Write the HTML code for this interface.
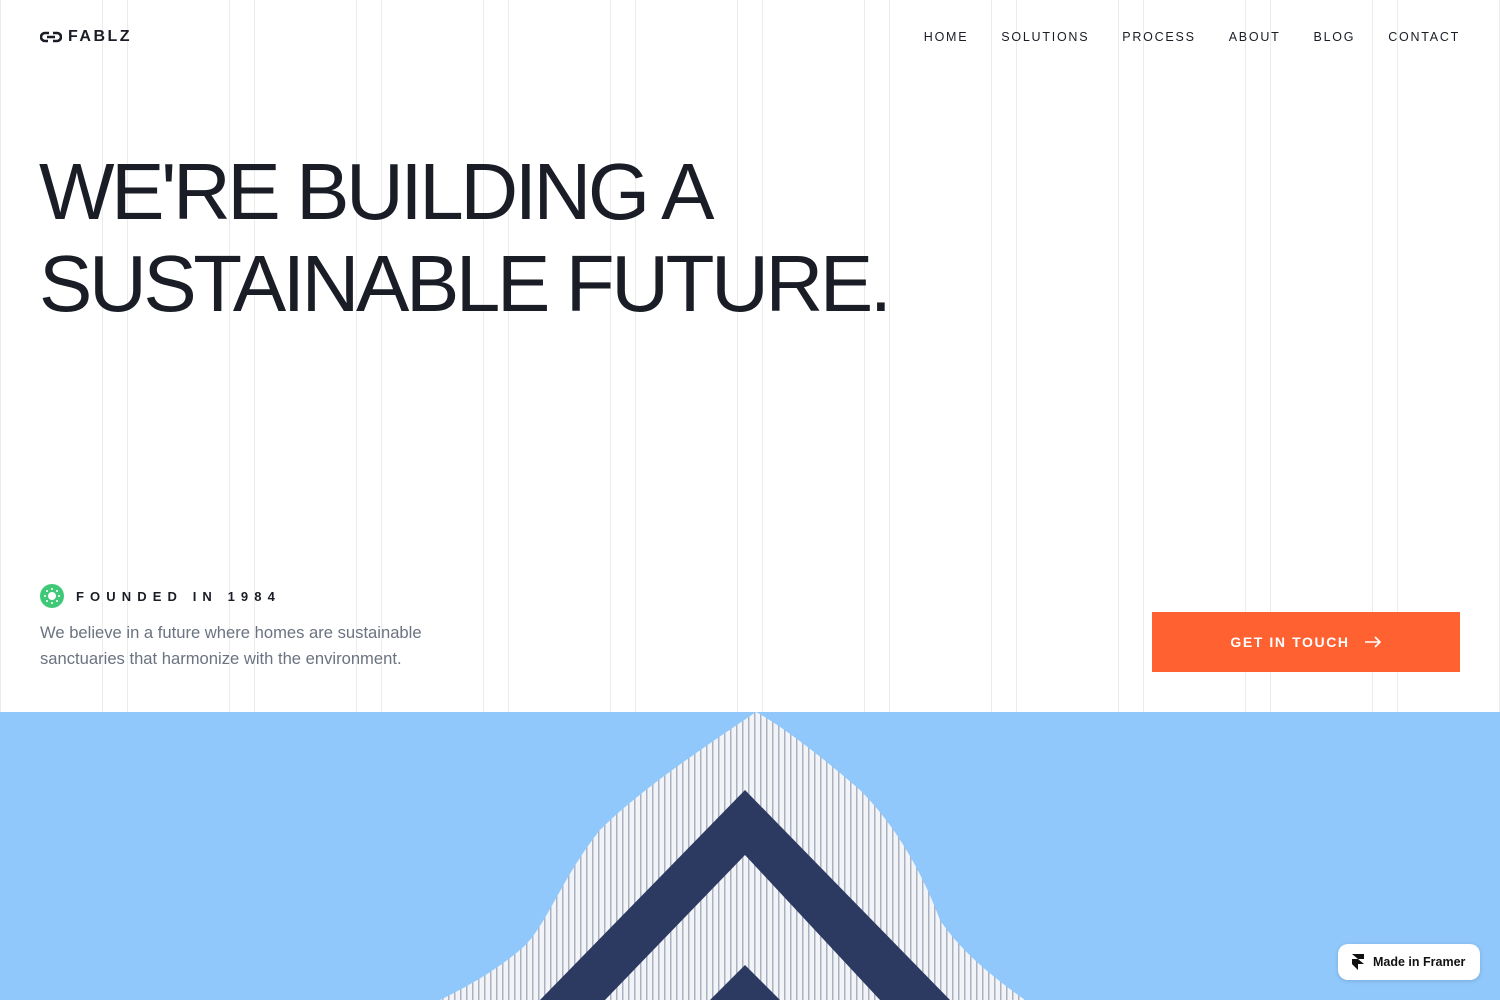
<!DOCTYPE html>
<html><head><meta charset="utf-8"><style>
*{margin:0;padding:0;box-sizing:border-box}
body{width:1500px;height:1000px;overflow:hidden;background:#fff;font-family:"Liberation Sans",sans-serif;color:#1a1d26;position:relative}
.col{position:absolute;top:0;height:712px;width:103px;border-left:1px solid #ececec;border-right:1px solid #ececec}
.logo{position:absolute;left:40px;top:28px;display:flex;align-items:center;font-weight:700;font-size:16px;letter-spacing:2.5px}
nav{position:absolute;right:40px;top:30px;display:flex;gap:33px;font-size:12.5px;letter-spacing:1.75px;color:#1a1d26}
h1{position:absolute;left:39px;top:146px;font-size:80px;line-height:92px;font-weight:400;letter-spacing:-3.4px;color:#1a1d26}
.f{position:absolute;left:40px;top:584px;display:flex;align-items:center;font-size:13px;letter-spacing:6.1px;font-weight:700}
.p{position:absolute;left:40px;top:620px;font-size:16.6px;line-height:26px;color:#6b7280}
.btn{position:absolute;left:1152px;top:612px;width:308px;height:60px;background:#ff6130;color:#fff;display:flex;align-items:center;justify-content:center;font-size:14px;letter-spacing:1.6px;font-weight:700}
.hero{position:absolute;left:0;top:712px;width:1500px;height:288px;background:#90c8fc;overflow:hidden}
.badge{position:absolute;left:1338px;top:944px;width:142px;height:36px;background:#fff;border-radius:10px;box-shadow:0 1px 4px rgba(0,0,0,.15);display:flex;align-items:center;font-size:12.5px;font-weight:700;color:#111;padding-left:14px}
</style></head><body>
<div class="col" style="left:0"></div><div class="col" style="left:127px"></div><div class="col" style="left:254px"></div><div class="col" style="left:381px"></div><div class="col" style="left:508px"></div><div class="col" style="left:635px"></div><div class="col" style="left:762px"></div><div class="col" style="left:889px"></div><div class="col" style="left:1016px"></div><div class="col" style="left:1143px"></div><div class="col" style="left:1270px"></div><div class="col" style="left:1397px"></div>
<div class="logo"><svg width="22" height="14" viewBox="0 0 22 14" style="margin-right:6px"><path d="M9 3H5a4 4 0 0 0 0 8h3M13 3h4a4 4 0 0 1 0 8h-4M7 7h8" fill="none" stroke="#1a1d26" stroke-width="2.6"/></svg>FABLZ</div>
<nav><span>HOME</span><span>SOLUTIONS</span><span>PROCESS</span><span>ABOUT</span><span>BLOG</span><span>CONTACT</span></nav>
<h1>WE'RE BUILDING A<br>SUSTAINABLE FUTURE.</h1>
<div class="f"><svg width="24" height="24" viewBox="0 0 24 24" style="margin-right:12px"><circle cx="12" cy="12" r="12" fill="#3ec878"/><circle cx="12" cy="12" r="4" fill="#fff"/><g fill="#fff"><circle cx="12" cy="5" r="1"/><circle cx="12" cy="19" r="1"/><circle cx="5" cy="12" r="1"/><circle cx="19" cy="12" r="1"/><circle cx="7" cy="7" r="1"/><circle cx="17" cy="7" r="1"/><circle cx="7" cy="17" r="1"/><circle cx="17" cy="17" r="1"/></g></svg>FOUNDED IN 1984</div>
<div class="p">We believe in a future where homes are sustainable<br>sanctuaries that harmonize with the environment.</div>
<div class="btn">GET IN TOUCH<svg width="18" height="12" viewBox="0 0 18 12" style="margin-left:14px"><path d="M1 6h15M11 1l5 5-5 5" fill="none" stroke="#fff" stroke-width="1.6"/></svg></div>
<div class="hero"><svg width="1500" height="288" viewBox="0 712 1500 288">
<defs><pattern id="st" width="6" height="10" patternUnits="userSpaceOnUse"><rect width="6" height="10" fill="#f2f4f8"/><rect x="4" width="1.5" height="10" fill="#aab2c2"/></pattern></defs>
<path d="M756 712 C700 750 640 790 600 830 C560 880 545 930 520 950 C490 975 460 990 440 1000 L1025 1000 C990 975 960 950 940 920 C925 880 900 830 860 790 C820 755 780 725 756 712Z" fill="url(#st)"/>
<path d="M745 790 L540 1000 L950 1000Z" fill="#2c3a62"/>
<path d="M745 855 L605 1000 L880 1000Z" fill="url(#st)"/>
<path d="M745 965 L710 1000 L780 1000Z" fill="#2c3a62"/>
</svg></div>
<div class="badge"><svg width="12" height="16" viewBox="0 0 12 16" style="margin-right:9px"><path d="M0 0h12v5H6zM0 5h6l6 5H6v6L0 10z" fill="#111"/></svg>Made in Framer</div>
</body></html>
